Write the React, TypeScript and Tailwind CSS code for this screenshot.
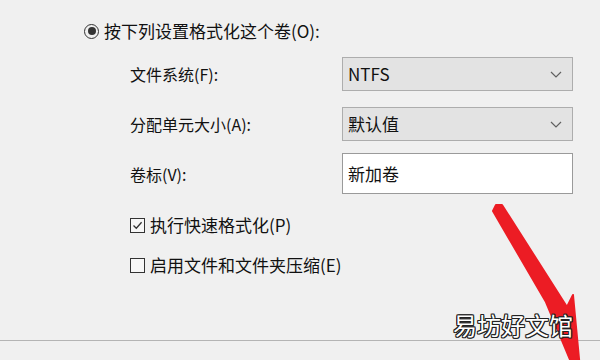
import React from "react";

// Windows "format volume" dialog fragment, with a red pointer arrow and a
// watermark laid over it.

function Radio() {
  return (
    <span className="flex h-[15px] w-[15px] items-center justify-center rounded-full border border-[#333]">
      <span className="h-[8px] w-[8px] rounded-full bg-[#333]" />
    </span>
  );
}

function Checkbox({ checked }: { checked?: boolean }) {
  return (
    <span className="flex h-[15px] w-[15px] items-center justify-center border border-[#333] bg-[#f7f7f7]">
      {checked && (
        <svg width="11" height="11" viewBox="0 0 11 11" fill="none">
          <path d="M1.5 5.5 L4.3 8.3 L9.6 2.2" stroke="#333" strokeWidth="1.3" />
        </svg>
      )}
    </span>
  );
}

function Select({ value }: { value: string }) {
  return (
    <div className="flex h-[34px] w-[231px] items-center justify-between border border-[#adadad] bg-[#e3e3e3] pl-[5px] pr-[10px] text-[17px]">
      <span>{value}</span>
      <svg width="12" height="7" viewBox="0 0 12 7" fill="none">
        <path d="M1 1 L6 6 L11 1" stroke="#606060" strokeWidth="1.2" />
      </svg>
    </div>
  );
}

function Row({ label, children, h }: { label: string; children: React.ReactNode; h: string }) {
  return (
    <div className={`flex items-center ${h}`}>
      <span className="w-[212px] text-[16px]">{label}</span>
      {children}
    </div>
  );
}

export default function App() {
  return (
    <div className="relative h-[360px] w-[600px] overflow-hidden bg-[#f0f0f0] font-['Noto_Sans_CJK_SC','Noto_Sans',sans-serif] text-[#111]">
      <div className="flex h-[340px] flex-col pl-[84px] pt-[20px]">
        <div className="flex h-[22px] items-center gap-[5px] text-[17px]">
          <Radio />
          <span>按下列设置格式化这个卷(O):</span>
        </div>

        <div className="ml-[46px] mt-[15px] flex flex-col">
          <Row label="文件系统(F):" h="h-[34px]">
            <Select value="NTFS" />
          </Row>
          <div className="mt-[16px]">
            <Row label="分配单元大小(A):" h="h-[34px]">
              <Select value="默认值" />
            </Row>
          </div>
          <div className="mt-[12px]">
            <Row label="卷标(V):" h="h-[41px]">
              <div className="flex h-[41px] w-[231px] items-center border border-[#9a9a9a] bg-white pl-[5px] text-[17px]">
                新加卷
              </div>
            </Row>
          </div>

          <div className="mt-[20px] flex h-[22px] items-center gap-[5px] text-[17px]">
            <Checkbox checked />
            <span>执行快速格式化(P)</span>
          </div>
          <div className="mt-[18px] flex h-[22px] items-center gap-[5px] text-[17px]">
            <Checkbox />
            <span>启用文件和文件夹压缩(E)</span>
          </div>
        </div>
      </div>
      <div className="h-px bg-[#b4b4b4]" />

      <svg className="absolute inset-0" width="600" height="360" viewBox="0 0 600 360">
        <polygon
          points="493,211 496,205 502,205 567,307 573,295 581,380 571,362 546,302"
          fill="#ec1c24"
          stroke="#ec1c24"
          strokeWidth="2"
          strokeLinejoin="round"
        />
      </svg>

      <span className="absolute left-[453px] top-[310px] text-[24px] leading-[30px] text-white [text-shadow:1px_0_0_#222,-1px_0_0_#222,0_1px_0_#222,0_-1px_0_#222,1px_1px_0_#222,-1px_-1px_0_#222,1px_-1px_0_#222,-1px_1px_0_#222]">
        易坊好文馆
      </span>
    </div>
  );
}
